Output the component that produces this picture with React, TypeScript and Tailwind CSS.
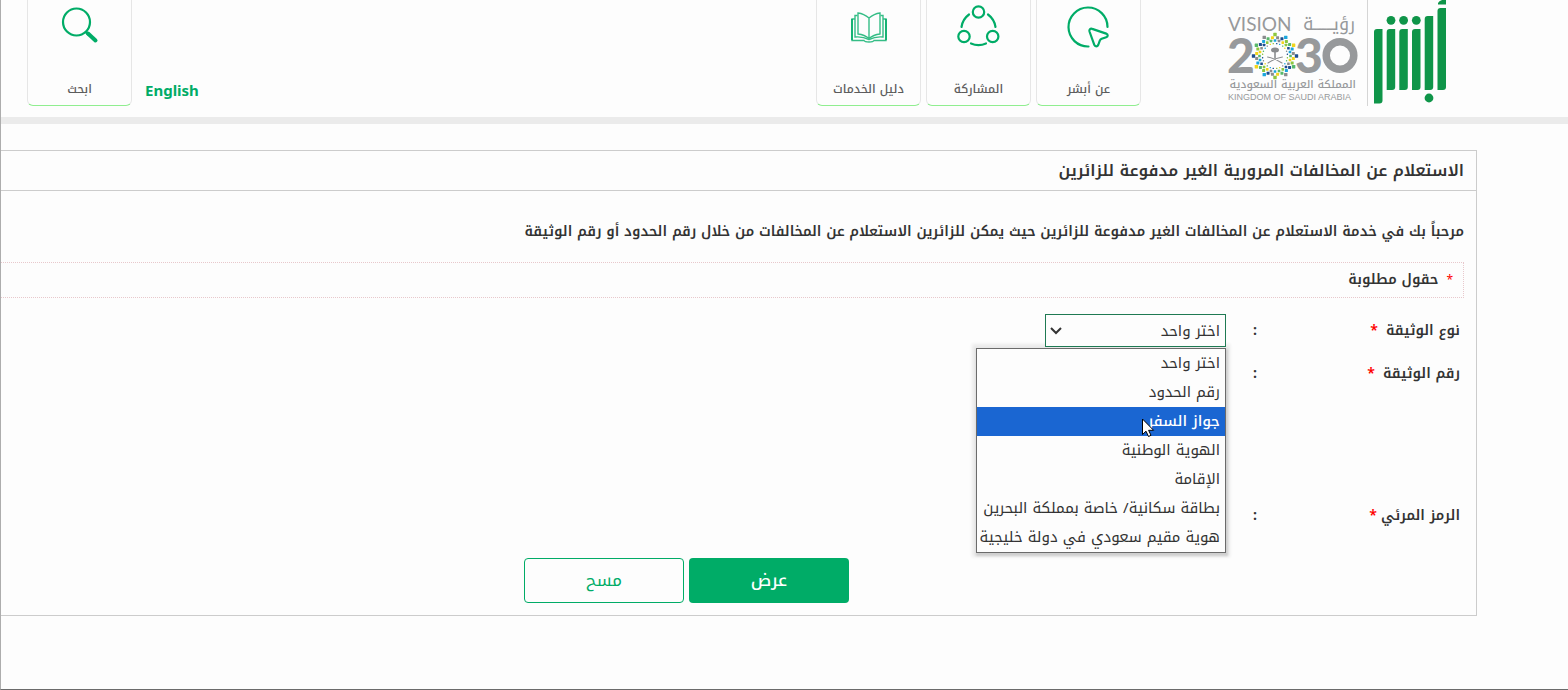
import type { ReactNode } from "react";

const PALETTE = ["#8cc63f", "#1ba6dd", "#f2d51c", "#1f4f8f", "#58b96b", "#8a8c8e"];

const DOCUMENT_TYPES = [
  "اختر واحد",
  "رقم الحدود",
  "جواز السفر",
  "الهوية الوطنية",
  "الإقامة",
  "بطاقة سكانية/ خاصة بمملكة البحرين",
  "هوية مقيم سعودي في دولة خليجية",
];

const RINGS = [
  { radius: 21.5, offsets: [0], size: 3.4 },
  { radius: 18.5, offsets: [-8, 8], size: 3 },
  { radius: 15.5, offsets: [-15, 0], size: 2.6 },
  { radius: 12.5, offsets: [-8, 8], size: 1.4 },
];

function Emblem() {
  const dots: ReactNode[] = [];
  for (let tip = 0; tip < 12; tip++) {
    RINGS.forEach((ring, r) =>
      ring.offsets.forEach((offset, o) => {
        const angle = ((tip * 30 + offset - 90) * Math.PI) / 180;
        const x = 48 + ring.radius * Math.cos(angle);
        const y = 56 + ring.radius * Math.sin(angle);
        dots.push(
          <rect
            key={`${tip}-${r}-${o}`}
            x={x - ring.size / 2}
            y={y - ring.size / 2}
            width={ring.size}
            height={ring.size}
            rx="0.4"
            fill={PALETTE[(tip + r * 2 + o * 3) % PALETTE.length]}
          />,
        );
      }),
    );
  }
  return (
    <g>
      {dots}
      <ellipse cx="48" cy="50" rx="4" ry="2.500" fill="#8a8c8e" />
      <g stroke="#8a8c8e" fill="none" strokeLinecap="round">
        <path d="M48 50v8" strokeWidth="1.600" />
        <path d="M40.500 57c4 .5 10 3 14.500 6M55.500 57c-4 .5-10 3-14.500 6" strokeWidth="1.100" />
      </g>
    </g>
  );
}

function VisionLogo() {
  return (
    <svg width="132" height="106" viewBox="0 0 132 106" role="img" aria-label="Vision 2030">
      <g fill="#97999b" direction="ltr">
        <text x="1" y="31" fontSize="19" className="font-[Lato,sans-serif]">VISION</text>
        <text x="128" y="30" fontSize="18" direction="rtl" className="font-['Noto_Kufi_Arabic','DejaVu_Sans',sans-serif]">رؤيــــــة</text>
        <text x="0" y="73" fontSize="48" fontWeight="900" className="font-[Lato,sans-serif]">2</text>
        <text x="68" y="73" fontSize="48" fontWeight="900" className="font-[Lato,sans-serif]">3</text>
        <circle cx="113" cy="55.500" r="13.800" fill="none" stroke="#97999b" strokeWidth="7.500" />
        <text x="129" y="88" fontSize="11" fontWeight="500" direction="rtl" className="font-['Noto_Kufi_Arabic','DejaVu_Sans',sans-serif]">المملكة العربية السعودية</text>
        <text x="1" y="100" fontSize="9" className="font-['Liberation_Sans',sans-serif]">KINGDOM OF SAUDI ARABIA</text>
      </g>
      <Emblem />
    </svg>
  );
}

const BARS = [
  { x: 0, top: 29, bottom: 103.5 },
  { x: 12.7, top: 29, bottom: 90 },
  { x: 25.300, top: 29, bottom: 90 },
  { x: 38, top: 29, bottom: 90 },
  { x: 50.700, top: 16, bottom: 90 },
  { x: 63.500, top: 8, bottom: 90 },
];

function AbsherLogo() {
  return (
    <svg width="72" height="106" viewBox="0 0 72 106" role="img" aria-label="أبشر" fill="#0f9549">
      {BARS.map((bar) => (
        <path
          key={bar.x}
          d={`M${bar.x} ${bar.top + 3}q0-3 3-3h5.500V${bar.bottom - 3}q0 3-3 3h-5.500z`}
        />
      ))}
      <path d="M64 4.500V3q1-2 4-3h4v4.500z" />
      <circle cx="17" cy="20.300" r="4.400" />
      <circle cx="29.600" cy="20.300" r="4.400" />
      <circle cx="42.300" cy="20.300" r="4.400" />
      <circle cx="55" cy="98" r="4.400" />
    </svg>
  );
}

function CursorIcon() {
  return (
    <svg width="44" height="44" viewBox="0 0 44 44" fill="none" stroke="#00ac67" strokeWidth="2.200" strokeLinecap="round" strokeLinejoin="round">
      <path d="M40.500 22A19.500 19.500 0 1 0 21.500 41.500" />
      <path d="M22.500 26.500c-.6-2 .8-3.300 2.700-2.600l14 4.700c2 .8 2 3 0 3.700l-4.500 1.500c-1 .4-1.600 1-2 2l-1.500 4.200c-.8 1.800-3.200 1.800-3.900-.1z" />
    </svg>
  );
}

function ShareIcon() {
  return (
    <svg width="44" height="44" viewBox="0 0 44 44" fill="none" stroke="#00ac67" strokeWidth="2.200" strokeLinecap="round">
      <circle cx="21.500" cy="7" r="5.700" />
      <circle cx="7" cy="31.500" r="5.700" />
      <circle cx="35.700" cy="31.500" r="5.700" />
      <path d="M12 9.500A19 19 0 0 0 4.500 22M31 9.500A19 19 0 0 1 38.500 22M14 38.500a19 19 0 0 0 15 0" />
    </svg>
  );
}

function BookIcon() {
  return (
    <svg width="44" height="44" viewBox="0 0 44 44" fill="none" stroke="#35bd86" strokeWidth="1.400">
      <path d="M22 13c-3-2.500-7-4.500-11-5v21c4 .5 8 2 11 4.500 3-2.500 7-4 11-4.500V8c-4 .5-8 2.500-11 5zM22 13v20.500" />
      <path d="M10.500 10.500H8V32c5-.5 10 .5 14 2.500 4-2 9-3 14-2.500V10.500h-2.500" />
      <path d="M8 14H5v21.500h12c1 2 9 2 10 0h12V14h-3" />
      <path d="M5 14v21M39 14v21" stroke="#00ac67" strokeWidth="1.600" />
    </svg>
  );
}

function SearchIcon() {
  return (
    <svg width="44" height="44" viewBox="0 0 44 44" fill="none" stroke="#00ac67" strokeLinecap="round">
      <circle cx="18.500" cy="17" r="13.500" strokeWidth="2.200" />
      <path d="M28.500 27.500l1.500 1.500" strokeWidth="3" />
      <path d="M30 28.500L37.500 35.500" strokeWidth="4" />
    </svg>
  );
}

function NavCard({ icon, label }: { icon: ReactNode; label: string }) {
  return (
    <a
      href="#"
      className="flex h-[106px] w-[105px] flex-col items-center justify-between rounded-b-md border-x border-b border-x-[#e6e6e6] border-b-[#90ee90] pt-[5px] pb-[6px] text-xs font-medium leading-5 text-[#5c5c5c]"
    >
      {icon}
      <span>{label}</span>
    </a>
  );
}

function FieldLabel({ htmlFor, children }: { htmlFor?: string; children: ReactNode }) {
  return (
    <>
      <label htmlFor={htmlFor} className="flex w-[203px] whitespace-nowrap">
        {children}
      </label>
      <span className="w-[31px] font-bold">:</span>
    </>
  );
}

export default function App() {
  return (
    <div
      dir="rtl"
      lang="ar"
      className="flex min-h-screen flex-col border-b border-l border-b-[#6b6b6b] border-l-[#adadad] bg-[#fdfdfd] font-['Noto_Kufi_Arabic','DejaVu_Sans',sans-serif] text-[#333]"
    >
      <header className="flex h-[124px] items-start border-b-[7px] border-[#ebebeb] pr-[122px] pl-[26px]">
        <AbsherLogo />
        <div className="mr-[6px] h-[106px] border-r border-[#d5d5d5] pr-2">
          <VisionLogo />
        </div>
        <nav className="mr-[86px] flex flex-1 gap-[5px]">
          <NavCard icon={<CursorIcon />} label="عن أبشر" />
          <NavCard icon={<ShareIcon />} label="المشاركة" />
          <NavCard icon={<BookIcon />} label="دليل الخدمات" />
        </nav>
        <a href="#" lang="en" className="mt-20 ml-[13px] font-['Noto_Sans',sans-serif] text-[15px] font-bold leading-5 text-[#00ac67]">
          English
        </a>
        <NavCard icon={<SearchIcon />} label="ابحث" />
      </header>

      <main className="mt-[26px] mr-[91px] border-y border-r border-[#ccc]">
        <h1 className="flex h-10 items-center border-b border-[#ccc] pr-3 text-base font-semibold">
          الاستعلام عن المخالفات المرورية الغير مدفوعة للزائرين
        </h1>
        <p className="mt-[25px] mr-3 text-sm font-semibold leading-8">
          مرحباً بك في خدمة الاستعلام عن المخالفات الغير مدفوعة للزائرين حيث يمكن للزائرين الاستعلام عن المخالفات من خلال رقم الحدود أو رقم الوثيقة
        </p>
        <p className="mt-[14px] mr-3 flex h-9 items-center gap-2 border-y border-r border-dotted border-[#e8c8cc] pr-[10px] text-sm font-semibold">
          <span className="text-xs font-normal text-[#f00]">*</span>
          حقول مطلوبة
        </p>

        <form className="pt-4 pr-4 pb-3 text-sm font-semibold" onSubmit={(event) => event.preventDefault()}>
          <div className="flex h-[33px] items-center">
            <FieldLabel htmlFor="document-type">
              نوع الوثيقة<span className="mr-2 text-[#f00]">*</span>
            </FieldLabel>
            <div className="relative w-[181px]">
              <select
                id="document-type"
                className="relative z-20 block h-[33px] w-full appearance-none border border-[#1f7a53] bg-[#fdfdfd] pt-[2px] pr-[5px] text-[15px] font-normal outline-none"
              >
                {DOCUMENT_TYPES.map((type) => (
                  <option key={type}>{type}</option>
                ))}
              </select>
              <svg className="pointer-events-none absolute top-3 left-[5px] z-20" width="12" height="10" viewBox="0 0 12 10" fill="none" stroke="#333" strokeWidth="2">
                <path d="M1 2l5 5 5-5" />
              </svg>
              <ul
                role="listbox"
                aria-label="نوع الوثيقة"
                className="absolute top-[34px] right-0 z-10 w-[250px] border border-[#6b6b6b] bg-[#fdfdfd] text-[15px] font-normal shadow-[1px_2px_2px_1px_#cfcfcf,0_0_3px_4px_#ebebeb]"
              >
                {DOCUMENT_TYPES.map((type, index) => (
                  <li
                    key={type}
                    role="option"
                    aria-selected={index === 2}
                    className="h-[29px] pr-[5px] leading-[29px] whitespace-nowrap aria-selected:bg-[#1a66d2] aria-selected:font-medium aria-selected:text-white"
                  >
                    {type}
                  </li>
                ))}
              </ul>
              <svg className="absolute top-[104px] right-[71px] z-20" width="14" height="20" viewBox="0 0 14 20" fill="#fff" stroke="#000" strokeWidth="1">
                <path d="M1.500 1v15.500l3.500-3.300 2.500 5.300 2.500-1.200-2.400-5h5z" />
              </svg>
            </div>
          </div>
          <div className="mt-[10px] flex h-[33px] items-center">
            <FieldLabel>
              رقم الوثيقة<span className="mr-2 text-[#f00]">*</span>
            </FieldLabel>
          </div>
          <div className="mt-[109px] flex h-[33px] items-center">
            <FieldLabel>
              الرمز المرئي<span className="mr-1 text-[#f00]">*</span>
            </FieldLabel>
          </div>
          <div className="mt-[26px] mr-[88px] flex justify-center gap-[5px]">
            <button type="submit" className="h-[45px] w-40 rounded bg-[#00ac67] text-[17px] font-medium text-white">
              عرض
            </button>
            <button type="reset" className="h-[45px] w-40 rounded border border-[#00ac67] text-[17px] font-normal text-[#00ac67]">
              مسح
            </button>
          </div>
        </form>
      </main>
    </div>
  );
}
